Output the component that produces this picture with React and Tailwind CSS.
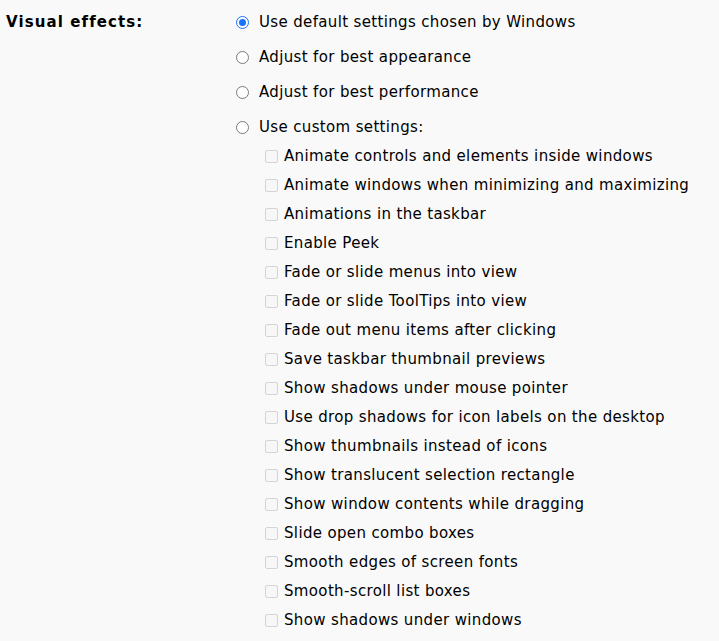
import React from "react";

const radios = [
  { label: "Use default settings chosen by Windows", checked: true },
  { label: "Adjust for best appearance" },
  { label: "Adjust for best performance" },
  { label: "Use custom settings:" },
];

const effects = [
  "Animate controls and elements inside windows",
  "Animate windows when minimizing and maximizing",
  "Animations in the taskbar",
  "Enable Peek",
  "Fade or slide menus into view",
  "Fade or slide ToolTips into view",
  "Fade out menu items after clicking",
  "Save taskbar thumbnail previews",
  "Show shadows under mouse pointer",
  "Use drop shadows for icon labels on the desktop",
  "Show thumbnails instead of icons",
  "Show translucent selection rectangle",
  "Show window contents while dragging",
  "Slide open combo boxes",
  "Smooth edges of screen fonts",
  "Smooth-scroll list boxes",
  "Show shadows under windows",
];

const Radio = ({ checked }) => (
  <span
    className={
      "flex h-[13px] w-[13px] shrink-0 items-center justify-center rounded-full border bg-white " +
      (checked ? "border-[#1a73ff]" : "border-[#7a7a7a]")
    }
  >
    {checked && <span className="h-[7px] w-[7px] rounded-full bg-[#1a73ff]"></span>}
  </span>
);

const App = () => {
  return (
    <div
      className="flex min-h-[641px] w-full bg-[#f9f9f9] pt-[8px] text-[15px] tracking-[0.35px] text-black"
      style={{ fontFamily: '"DejaVu Sans", Verdana, sans-serif' }}
    >
      <div className="w-[236px] shrink-0 pl-[6px]">
        <div className="flex h-[29px] items-center font-bold tracking-[1.1px]">Visual effects:</div>
      </div>

      <div className="flex flex-col">
        {radios.map((r, i) => (
          <div
            key={r.label}
            className={"flex h-[29px] items-center gap-[10px] " + (i < 3 ? "mb-[6px]" : "")}
          >
            <Radio checked={r.checked} />
            <span>{r.label}</span>
          </div>
        ))}

        <div className="ml-[29px] flex flex-col">
          {effects.map((e) => (
            <div key={e} className="flex h-[29px] items-center gap-[6px]">
              <span className="h-[13px] w-[13px] shrink-0 rounded-[2px] border border-[#d4d4d4] bg-[#f7f7f7]"></span>
              <span>{e}</span>
            </div>
          ))}
        </div>
      </div>
    </div>
  );
};

export default App;
